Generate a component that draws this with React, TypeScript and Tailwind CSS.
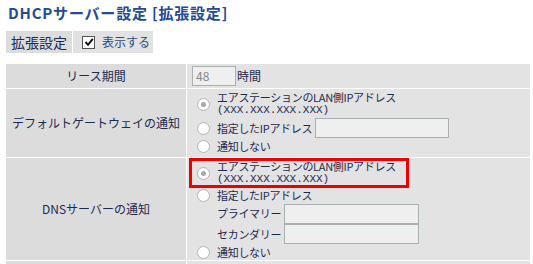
import { ReactNode } from "react";

const jp = "font-['Noto_Sans_CJK_JP','Noto_Sans',sans-serif]";

function Radio({ checked = false }: { checked?: boolean }) {
	return (
		<span className="flex h-[13px] w-[13px] shrink-0 items-center justify-center rounded-full border border-[#b4b4b4] bg-white">
			{checked && <span className="h-[5px] w-[5px] rounded-full bg-[#a8a8a8]" />}
		</span>
	);
}

function TextBox({ width, value }: { width: string; value?: string }) {
	return (
		<div className={`${width} flex h-[20px] items-center border border-[#a9b0b0] bg-[#efefef] px-[3px] text-[12px] tracking-normal text-[#888]`}>
			{value}
		</div>
	);
}

function Cell({ children, className = "" }: { children: ReactNode; className?: string }) {
	return <div className={`bg-[#e3e3e3] tracking-[-0.3px] ${className}`}>{children}</div>;
}

function Label({ children }: { children: ReactNode }) {
	return <div className="flex items-center justify-center bg-[#dcdcdc] text-[12px]">{children}</div>;
}

function AirStationOption() {
	return (
		<div className="flex items-center">
			<Radio checked />
			<div className="ml-[7px] leading-[13px]">
				<div>エアステーションのLAN側IPアドレス</div>
				<div className="font-['Liberation_Mono',monospace] tracking-normal">(XXX.XXX.XXX.XXX)</div>
			</div>
		</div>
	);
}

export default function App() {
	return (
		<div className={`${jp} min-h-[264px] bg-white px-[6px] pt-[3px] text-[#1c2a50]`}>
			<h1 className="pl-[2px] text-[15px] font-bold leading-[20px] tracking-[0.8px] text-[#234a94]">DHCPサーバー設定 [拡張設定]</h1>
			<div className="mt-[8px] flex h-[22px] gap-px">
				<div className="flex w-[66px] items-center justify-center bg-[#dcdcdc] text-[14px]">拡張設定</div>
				<div className="flex w-[80px] items-center bg-[#e2e2e2] pl-[9px] text-[12px] text-[#2a4a8a]">
					<span className="flex h-[13px] w-[13px] items-center justify-center border border-[#555] bg-white">
						<svg viewBox="0 0 10 10" className="h-[10px] w-[10px]">
							<path d="M1.5 5 L4 7.8 L8.8 1.8" fill="none" stroke="#111" strokeWidth="2" />
						</svg>
					</span>
					<span className="ml-[7px]">表示する</span>
				</div>
			</div>
			<div className="mt-[11px] grid w-[524px] grid-cols-[180px_343px] gap-px text-[11px]">
				<Label>リース期間</Label>
				<Cell className="flex h-[24px] items-center pl-[5px]">
					<TextBox width="w-[44px]" value="48" />
					<span className="ml-px text-[12px] tracking-normal">時間</span>
				</Cell>

				<Label>デフォルトゲートウェイの通知</Label>
				<Cell className="flex h-[68px] flex-col pl-[10px] pt-[2px]">
					<div className="flex h-[26px] items-center">
						<AirStationOption />
					</div>
					<div className="flex h-[22px] items-center">
						<Radio />
						<span className="ml-[7px]">指定したIPアドレス</span>
						<div className="ml-[3px]">
							<TextBox width="w-[134px]" />
						</div>
					</div>
					<div className="flex h-[15px] items-center">
						<Radio />
						<span className="ml-[7px]">通知しない</span>
					</div>
				</Cell>

				<Label>DNSサーバーの通知</Label>
				<Cell className="flex h-[102px] flex-col">
					<div className="ml-[2px] flex h-[30px] w-[220px] items-center border-[3px] border-[#ee0000] pl-[5px]">
						<AirStationOption />
					</div>
					<div className="flex h-[15px] items-center pl-[10px]">
						<Radio />
						<span className="ml-[7px]">指定したIPアドレス</span>
					</div>
					<div className="flex h-[21px] items-center pl-[30px]">
						<span className="w-[67px]">プライマリー</span>
						<TextBox width="w-[135px]" />
					</div>
					<div className="flex h-[20px] items-center pl-[30px]">
						<span className="w-[67px]">セカンダリー</span>
						<TextBox width="w-[135px]" />
					</div>
					<div className="flex h-[16px] items-center pl-[10px]">
						<Radio />
						<span className="ml-[7px]">通知しない</span>
					</div>
				</Cell>

				<div className="h-[20px] bg-[#dcdcdc]" />
				<Cell className="h-[20px]">{null}</Cell>
			</div>
		</div>
	);
}
